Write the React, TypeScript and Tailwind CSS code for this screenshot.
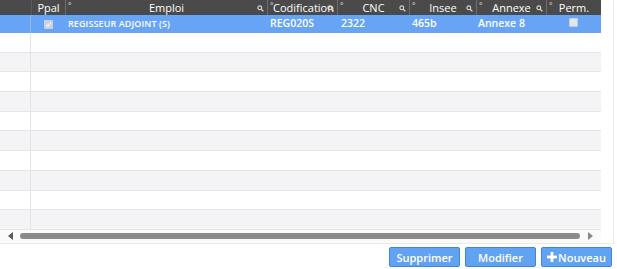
import React from "react";

const Mag = () => (
  <svg width="7" height="7" viewBox="0 0 7 7" className="absolute right-[3px] top-[5px]">
    <circle cx="2.8" cy="2.8" r="1.9" fill="none" stroke="#d8d8d8" strokeWidth="1.1" />
    <line x1="4.2" y1="4.2" x2="6.4" y2="6.4" stroke="#d8d8d8" strokeWidth="1.3" />
  </svg>
);

const cols = [
  { w: "w-[31px]", label: "", deg: false, mag: false },
  { w: "w-[34px]", label: "Ppal", deg: false, mag: false },
  { w: "w-[202px]", label: "Emploi", deg: true, mag: true },
  { w: "w-[70px]", label: "Codification", deg: true, mag: true, left: true },
  { w: "w-[72px]", label: "CNC", deg: true, mag: true },
  { w: "w-[67px]", label: "Insee", deg: true, mag: true },
  { w: "w-[70px]", label: "Annexe", deg: true, mag: true },
  { w: "w-[55px]", label: "Perm.", deg: true, mag: false },
];

export default function App() {
  const rows = Array.from({ length: 10 });
  return (
    <div className="w-[617px] h-[269px] bg-white overflow-hidden" style={{ fontFamily: '"Open Sans", "Noto Sans", sans-serif' }}>
      <div className="w-[614px] h-[244px] border-r border-b border-[#ebebeb] flex flex-col">
        <div className="w-[601px] flex flex-col">
          {/* header */}
          <div className="flex h-[15px] bg-[#4a4a4a]">
            {cols.map((c, i) => (
              <div
                key={i}
                className={`${c.w} relative h-full flex items-center ${c.left ? "justify-start pl-[5px]" : "justify-center"} text-[11px] leading-none text-white ${i > 1 ? "border-l border-[#6e6e6e]" : ""} ${i === 1 ? "border-l border-[#5a5a5a]" : ""}`}
              >
                {c.deg && <span className="absolute left-[2px] top-[1px] text-[8px] leading-none text-[#e4e4e4]">°</span>}
                <span className="whitespace-nowrap">{c.label}</span>
                {c.mag && <Mag />}
              </div>
            ))}
          </div>
          {/* selected row */}
          <div className="flex h-[18px] bg-[#67a4f6] items-center text-white font-semibold">
            <div className="w-[31px] h-full border-r border-[#8fbcf8]" />
            <div className="w-[34px] flex justify-center">
              <div className="w-[9px] h-[9px] bg-[#c9d3de] rounded-[1px] flex items-center justify-center">
                <svg width="7" height="7" viewBox="0 0 7 7">
                  <path d="M1 3.6 L2.8 5.3 L6 1.6" fill="none" stroke="#f4f4f4" strokeWidth="1.2" />
                </svg>
              </div>
            </div>
            <div className="w-[202px] pl-[3px] text-[9px] tracking-[0.1px]">REGISSEUR ADJOINT (S)</div>
            <div className="w-[70px] pl-[3px] text-[10.5px]">REG020S</div>
            <div className="w-[72px] pl-[4px] text-[10.5px]">2322</div>
            <div className="w-[67px] pl-[3px] text-[10.5px]">465b</div>
            <div className="w-[70px] pl-[2px] text-[10.5px]">Annexe 8</div>
            <div className="w-[55px] flex justify-center">
              <div className="w-[9px] h-[9px] bg-[#dfe6ef] border border-[#c3cfdc] rounded-[1px] -mt-[3px]" />
            </div>
          </div>
          {rows.map((_, i) => (
            <div
              key={i}
              className={`flex h-[19.7px] border-b border-[#e5e5e5] ${i % 2 === 0 ? "bg-white" : "bg-[#f4f4f6]"}`}
            >
              <div className="w-[31px] h-full border-r border-[#e3e3e3]" />
            </div>
          ))}
        </div>
        {/* scrollbar */}
        <div className="flex items-center h-[13px] w-[601px] bg-[#fafafa]">
          <div className="w-[20px] flex justify-center">
            <div className="w-0 h-0 border-y-[4px] border-y-transparent border-r-[5px] border-r-[#5a5a5a]" />
          </div>
          <div className="w-[560px] h-[6px] rounded-full bg-[#8a8a8a]" />
          <div className="flex-1 flex justify-center">
            <div className="w-0 h-0 border-y-[4px] border-y-transparent border-l-[5px] border-l-[#8a8a8a]" />
          </div>
        </div>
      </div>
      {/* buttons */}
      <div className="flex justify-end gap-[5px] pr-[5px] mt-[3px]">
        <button className="w-[71px] h-[20px] rounded-[2px] bg-[#62a2f2] border border-[#3f84dd] text-white text-[11px] font-semibold leading-none">
          Supprimer
        </button>
        <button className="w-[71px] h-[20px] rounded-[2px] bg-[#62a2f2] border border-[#3f84dd] text-white text-[11px] font-semibold leading-none">
          Modifier
        </button>
        <button className="w-[71px] h-[20px] rounded-[2px] bg-[#62a2f2] border border-[#3f84dd] text-white text-[11px] font-semibold leading-none flex items-center justify-center gap-[1px]">
          <svg width="10" height="10" viewBox="0 0 10 10">
            <rect x="3.6" y="0" width="2.8" height="10" fill="white" />
            <rect x="0" y="3.6" width="10" height="2.8" fill="white" />
          </svg>
          <span>Nouveau</span>
        </button>
      </div>
    </div>
  );
}
